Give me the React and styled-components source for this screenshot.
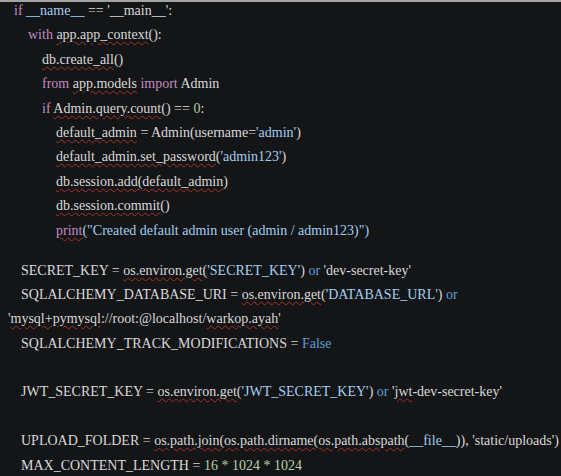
import React from 'react';
import styled, { createGlobalStyle } from 'styled-components';

const Global = createGlobalStyle`
  html, body {
    margin: 0;
    padding: 0;
    background: #141517;
  }
`;

const Editor = styled.div`
  width: 561px;
  height: 476px;
  box-sizing: border-box;
  background: #141517;
  border-top: 2px solid #a4a4a4;
  overflow: hidden;
  font-family: 'Liberation Serif', 'Times New Roman', serif;
  font-size: 14px;
  color: #d9d9d9;
`;

const Code = styled.div`
  margin-top: -3px;
  display: flex;
  flex-direction: column;
`;

const Line = styled.div`
  height: 24.4px;
  line-height: 24.4px;
  padding-left: ${(p) => p.indent}px;
  white-space: pre;
`;

const Spacer = styled.div`
  height: ${(p) => p.size}px;
`;

const Kw = styled.span`
  color: #c28bc0;
`;

const Str = styled.span`
  color: #a3cff0;
`;

const Bl = styled.span`
  color: #5b9fd8;
`;

const Num = styled.span`
  color: #b8d0a8;
`;

const Sp = styled.span`
  text-decoration: underline wavy #a8322a;
  text-decoration-thickness: 1px;
  text-underline-offset: 2px;
`;

const App = () => (
  <Editor>
    <Global />
    <Code>
      <Line indent={14}>
        <Kw>if</Kw> <Str>__name__</Str> == '__main__':
      </Line>
      <Line indent={28}>
        <Kw>with</Kw> <Sp>app.app_context</Sp>():
      </Line>
      <Line indent={42}>
        <Sp>db.create_all</Sp>()
      </Line>
      <Line indent={42}>
        <Kw>from</Kw> <Sp>app.models</Sp> <Kw>import</Kw> Admin
      </Line>
      <Line indent={42}>
        <Kw>if</Kw> <Sp>Admin.query.count</Sp>() == <Num>0</Num>:
      </Line>
      <Line indent={56}>
        <Sp>default_admin</Sp> = Admin(username=<Str>'admin'</Str>)
      </Line>
      <Line indent={56}>
        <Sp>default_admin.set_password</Sp>(<Str>'admin123'</Str>)
      </Line>
      <Line indent={56}>
        <Sp>db.session.add(default_admin</Sp>)
      </Line>
      <Line indent={56}>
        <Sp>db.session.commit</Sp>()
      </Line>
      <Line indent={56}>
        <Kw><Sp>print</Sp></Kw>
        <Str>("Created default admin user (admin / admin123)")</Str>
      </Line>
      <Spacer size={15.6} />
      <Line indent={21}>
        SECRET_KEY = <Sp>os.environ.get</Sp>(<Str>'SECRET_KEY'</Str>) <Bl>or</Bl> 'dev-secret-key'
      </Line>
      <Line indent={21}>
        SQLALCHEMY_DATABASE_URI = <Sp>os.environ.get</Sp>(<Str>'DATABASE_URL'</Str>) <Bl>or</Bl>
      </Line>
      <Line indent={8}>
        '<Sp>mysql+pymysql</Sp>://root:@localhost/<Sp>warkop.ayah</Sp>'
      </Line>
      <Line indent={21}>
        SQLALCHEMY_TRACK_MODIFICATIONS = <Bl>False</Bl>
      </Line>
      <Line indent={21} />
      <Line indent={21}>
        JWT_SECRET_KEY = <Sp>os.environ.get</Sp>(<Str>'JWT_SECRET_KEY'</Str>) <Bl>or</Bl> '<Sp>jwt</Sp>-dev-secret-key'
      </Line>
      <Line indent={21} />
      <Line indent={21}>
        UPLOAD_FOLDER = <Sp>os.path.join(os.path.dirname(os.path.abspath</Sp>(<Str>__file__</Str>)), 'static/uploads')
      </Line>
      <Line indent={21}>
        MAX_CONTENT_LENGTH = <Num>16 * 1024 * 1024</Num>
      </Line>
    </Code>
  </Editor>
);

export default App;
